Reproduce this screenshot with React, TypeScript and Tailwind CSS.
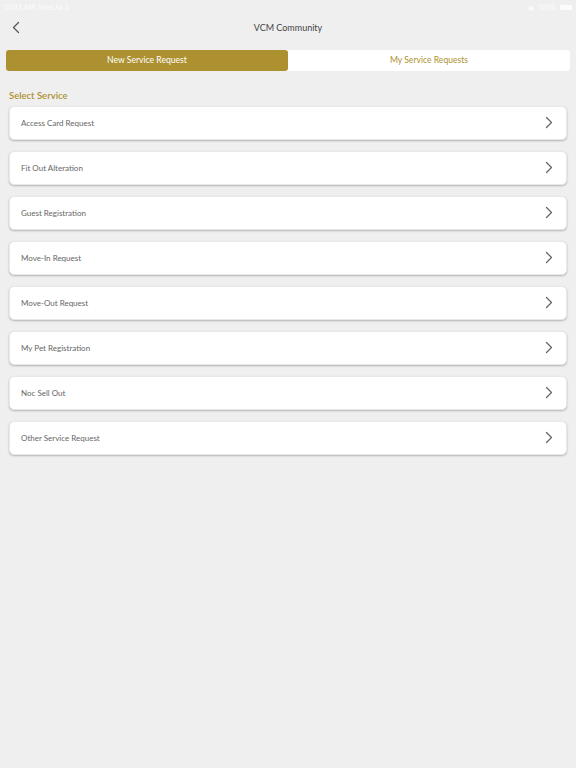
import React from 'react';

const services = [
  'Access Card Request',
  'Fit Out Alteration',
  'Guest Registration',
  'Move-In Request',
  'Move-Out Request',
  'My Pet Registration',
  'Noc Sell Out',
  'Other Service Request',
];

const Chevron = ({ dir = 'right', className = '' }: { dir?: 'left' | 'right'; className?: string }) => (
  <svg width="8" height="13" viewBox="0 0 8 13" className={className} fill="none">
    <path
      d={dir === 'right' ? 'M1.5 1.5l5 5-5 5' : 'M6.5 1.5l-5 5 5 5'}
      stroke="currentColor"
      strokeWidth="1.3"
      strokeLinecap="round"
      strokeLinejoin="round"
    />
  </svg>
);

const App = () => {
  return (
    <div className="min-h-screen w-[576px] bg-[#efefef] font-['Lato',sans-serif]">
      {/* barre d'état */}
      <div className="h-[14px] flex items-center justify-between px-[4px] text-[7px] text-white/80">
        <span>10:41 AM&nbsp;&nbsp;Wed Jul 3</span>
        <div className="flex items-center gap-[4px]">
          <span>◉</span>
          <span>100%</span>
          <div className="w-[12px] h-[5px] bg-white/80 rounded-[1px]" />
        </div>
      </div>

      {/* navigation */}
      <div className="relative h-[27px] flex items-center justify-center">
        <button className="absolute left-[12px] top-[7px] text-[#555]">
          <Chevron dir="left" />
        </button>
        <span className="text-[9px] text-[#444]">VCM Community</span>
      </div>

      {/* onglets */}
      <div className="mx-[6px] mt-[9px] flex h-[21px] bg-white rounded-[3px]">
        <div className="flex-1 flex items-center justify-center bg-[#ad9130] rounded-[3px] text-white text-[8.6px]">
          New Service Request
        </div>
        <div className="flex-1 flex items-center justify-center text-[#ad9130] text-[8.6px]">
          My Service Requests
        </div>
      </div>

      <div className="px-[9px] pt-[20px]">
        <div className="text-[9.5px] font-semibold text-[#ad9130] leading-none mb-[5px]">Select Service</div>
        <div className="flex flex-col gap-[11px]">
          {services.map((s) => (
            <div
              key={s}
              className="h-[34px] bg-white rounded-[5px] border border-[#e8e8e8] shadow-[0_1px_2px_rgba(0,0,0,0.25)] flex items-center justify-between pl-[11px] pr-[13px]"
            >
              <span className="text-[8px] text-[#666]">{s}</span>
              <Chevron className="text-[#666]" />
            </div>
          ))}
        </div>
      </div>
    </div>
  );
};

export default App;
